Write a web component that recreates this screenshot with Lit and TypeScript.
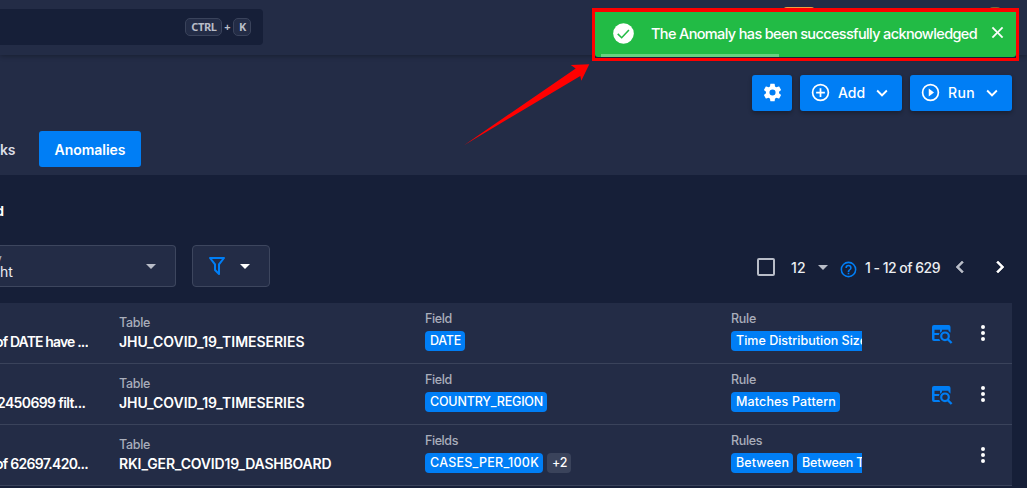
import { LitElement, html, css, svg, nothing } from "lit";
import { customElement, property } from "lit/decorators.js";

const ICONS = {
  cog: svg`<path d="M12 15.5A3.5 3.5 0 0 1 8.5 12 3.5 3.5 0 0 1 12 8.5a3.5 3.5 0 0 1 3.5 3.5 3.5 3.5 0 0 1-3.5 3.5m7.43-2.53c.04-.32.07-.64.07-.97s-.03-.66-.07-1l2.11-1.63c.19-.15.24-.42.12-.64l-2-3.46c-.12-.22-.39-.31-.61-.22l-2.49 1c-.52-.39-1.06-.73-1.69-.98l-.37-2.65A.506.506 0 0 0 14 2h-4c-.25 0-.46.18-.5.42l-.37 2.65c-.63.25-1.17.59-1.69.98l-2.49-1c-.22-.09-.49 0-.61.22l-2 3.46c-.13.22-.07.49.12.64L4.57 11c-.04.34-.07.67-.07 1s.03.65.07.97l-2.11 1.66c-.19.15-.25.42-.12.64l2 3.46c.12.22.39.3.61.22l2.49-1.01c.52.4 1.06.74 1.69.99l.37 2.65c.04.24.25.42.5.42h4c.25 0 .46-.18.5-.42l.37-2.65c.63-.26 1.17-.59 1.69-.99l2.49 1.01c.22.08.49 0 .61-.22l2-3.46c.12-.22.07-.49-.12-.64z"/>`,
  plus: svg`<path d="M12 20c-4.41 0-8-3.59-8-8s3.59-8 8-8 8 3.59 8 8-3.59 8-8 8m0-18A10 10 0 0 0 2 12a10 10 0 0 0 10 10 10 10 0 0 0 10-10A10 10 0 0 0 12 2m1 5h-2v4H7v2h4v4h2v-4h4v-2h-4z"/>`,
  play: svg`<path d="M12 20c-4.41 0-8-3.59-8-8s3.59-8 8-8 8 3.59 8 8-3.59 8-8 8m0-18A10 10 0 0 0 2 12a10 10 0 0 0 10 10 10 10 0 0 0 10-10A10 10 0 0 0 12 2m-2 14.5 6-4.5-6-4.5z"/>`,
  down: svg`<path d="M7.41 8.58 12 13.17l4.59-4.59L18 10l-6 6-6-6z"/>`,
  left: svg`<path d="M15.41 16.58 10.83 12l4.58-4.59L14 6l-6 6 6 6z" stroke="currentColor" stroke-width=".6"/>`,
  right: svg`<path d="M8.59 16.58 13.17 12 8.59 7.41 10 6l6 6-6 6z" stroke="currentColor" stroke-width=".6"/>`,
  caret: svg`<path d="m7 10 5 5 5-5z"/>`,
  filter: svg`<path d="M15 19.88c.04.3-.06.62-.29.83a.996.996 0 0 1-1.41 0L9.29 16.7a.99.99 0 0 1-.29-.83v-5.12L4.21 4.62a1 1 0 0 1 .17-1.4c.19-.14.4-.22.62-.22h14c.22 0 .43.08.62.22a1 1 0 0 1 .17 1.4L15 10.75zM7.04 5 11 10.06v5.52l2 2v-7.53L16.96 5z"/>`,
  help: svg`<path d="M11 18h2v-2h-2zm1-16A10 10 0 0 0 2 12a10 10 0 0 0 10 10 10 10 0 0 0 10-10A10 10 0 0 0 12 2m0 18c-4.41 0-8-3.59-8-8s3.59-8 8-8 8 3.59 8 8-3.59 8-8 8m0-14a4 4 0 0 0-4 4h2a2 2 0 0 1 2-2 2 2 0 0 1 2 2c0 2-3 1.75-3 5h2c0-2.25 3-2.5 3-5a4 4 0 0 0-4-4"/>`,
  close: svg`<path d="M19 6.41 17.59 5 12 10.59 6.41 5 5 6.41 10.59 12 5 17.59 6.41 19 12 13.41 17.59 19 19 17.59 13.41 12z" stroke="currentColor" stroke-width=".5"/>`,
  dots: svg`<path d="M12 16a2 2 0 0 1 2 2 2 2 0 0 1-2 2 2 2 0 0 1-2-2 2 2 0 0 1 2-2m0-6a2 2 0 0 1 2 2 2 2 0 0 1-2 2 2 2 0 0 1-2-2 2 2 0 0 1 2-2m0-6a2 2 0 0 1 2 2 2 2 0 0 1-2 2 2 2 0 0 1-2-2 2 2 0 0 1 2-2"/>`,
  check: svg`<circle cx="12" cy="12" r="11.800"/><path d="m5.400 12.500 4.500 4.300 8.300-8.800" fill="none" stroke="#22bb45" stroke-width="1.800"/>`,
  tableSearch: svg`<path d="M4 3h14.500a2 2 0 0 1 2 2v5.800a6 6 0 0 0-2-1.700V7.800H12v1.500a6 6 0 0 0-2 1.700V7.800H4.500V11h5.100l-.8 2H4.500v4h4.700q.4 1.200 1.200 2H4a2 2 0 0 1-2-2V5a2 2 0 0 1 2-2z"/><circle cx="15" cy="14.300" r="3.800" fill="none" stroke="currentColor" stroke-width="2.200"/><path d="m17.600 17 4 4" stroke="currentColor" stroke-width="2.400"/>`,
};

/** Square glyph from the icon set. */
@customElement("q-icon")
class QIcon extends LitElement {
  @property() name: keyof typeof ICONS = "cog";
  @property({ type: Number }) size = 20;
  static styles = css`
    :host { display: inline-flex; flex: none; }
    svg { display: block; fill: currentColor; }
  `;
  render() {
    return html`<svg width=${this.size} height=${this.size} viewBox="0 0 24 24">${ICONS[this.name]}</svg>`;
  }
}

/** Text that tracks itself to a given measure. */
@customElement("q-text")
class QText extends LitElement {
  @property() text = "";
  @property({ type: Number }) measure = 0;
  static styles = css`
    :host { display: inline-block; flex: none; white-space: pre; }
  `;
  render() {
    return html`<span>${this.text}</span>`;
  }
  updated() {
    const span = this.renderRoot.querySelector("span")!;
    span.style.letterSpacing = "0px";
    const natural = span.getBoundingClientRect().width;
    if (this.measure) {
      span.style.letterSpacing = `${(this.measure - natural) / this.text.length}px`;
    }
  }
}

type Label = [text: string, measure: number];
interface Row {
  note: Label;
  table: Label;
  fieldLabel: Label;
  fields: Label[];
  more?: Label;
  ruleLabel: Label;
  rules: Label[];
  source: boolean;
}

const ROWS: Row[] = [
  {
    note: ["of DATE have ...", 93],
    table: ["JHU_COVID_19_TIMESERIES", 185.5],
    fieldLabel: ["Field", 27],
    fields: [["DATE", 31]],
    ruleLabel: ["Rule", 25],
    rules: [["Time Distribution Size", 131]],
    source: true,
  },
  {
    note: ["2450699 filt... ", 91],
    table: ["JHU_COVID_19_TIMESERIES", 185.5],
    fieldLabel: ["Field", 27],
    fields: [["COUNTRY_REGION", 113]],
    ruleLabel: ["Rule", 25],
    rules: [["Matches Pattern", 100]],
    source: true,
  },
  {
    note: ["of 62697.420...", 93],
    table: ["RKI_GER_COVID19_DASHBOARD", 212.5],
    fieldLabel: ["Fields", 33],
    fields: [["CASES_PER_100K", 109]],
    more: ["+2", 15],
    ruleLabel: ["Rules", 31],
    rules: [["Between", 53], ["Between Times", 90]],
    source: false,
  },
];

const label = ([text, measure]: Label) =>
  html`<q-text .text=${text} .measure=${measure}></q-text>`;

@customElement("app-root")
class AppRoot extends LitElement {
  static styles = css`
    :host {
      display: flex;
      flex-direction: column;
      position: relative;
      width: 1027px;
      height: 488px;
      overflow: hidden;
      background: #161f38;
      color: #fff;
      font: 500 14px/20px Inter, "Open Sans", sans-serif;
    }
    * { box-sizing: border-box; }
    .top {
      flex: none;
      height: 55px;
      padding-top: 9px;
      background: #232c46;
      box-shadow: 0 1px 5px rgba(0, 0, 0, 0.3);
      z-index: 1;
    }
    .search {
      display: flex;
      align-items: center;
      justify-content: flex-end;
      gap: 2.5px;
      width: 263px;
      height: 36px;
      padding-right: 12px;
      border-radius: 0 4px 4px 0;
      background: #161f38;
      color: #b9bdc8;
      font: 700 11px/16px "Noto Sans", sans-serif;
    }
    .key {
      display: flex;
      align-items: center;
      justify-content: center;
      height: 18px;
      padding: 0 4px 0 5px;
      border: 1px solid #3a435b;
      border-radius: 5px;
      background: #232c46;
    }
    .head {
      flex: none;
      display: flex;
      flex-direction: column;
      height: 120px;
      padding-top: 20px;
      background: #232c46;
    }
    .actions {
      display: flex;
      justify-content: flex-end;
      gap: 8px;
      height: 36px;
      padding-right: 15px;
    }
    .btn {
      display: flex;
      align-items: center;
      height: 36px;
      border-radius: 3px;
      background: #007ef5;
      box-shadow: 0 2px 4px rgba(0, 0, 0, 0.3);
    }
    .btn.square { width: 40px; padding-bottom: 1px; justify-content: center; }
    .btn.wide { width: 102px; padding: 0 0 1px 10px; }
    .btn.wide q-text { margin: 1px 0 0 7px; width: 26px; }
    .btn.wide .chev { margin-left: 7px; }
    .tabs { display: flex; align-items: center; margin-top: 20px; height: 36px; }
    .tab { display: flex; justify-content: flex-end; width: 15px; margin-right: 24px; padding-top: 2px; color: #dcdfe6; font-weight: 600; }
    .tab.on {
      width: 102px;
      height: 36px;
      margin: 0;
      align-items: center;
      justify-content: center;
      border-radius: 3px;
      background: #007ef5;
      color: #fff;
    }
    .crumb {
      flex: none;
      display: flex;
      justify-content: flex-end;
      align-items: center;
      width: 4px;
      height: 70px;
      padding-top: 2px;
      font-weight: 700;
      font-size: 13px;
    }
    .filters { flex: none; display: flex; align-items: center; height: 42px; padding-right: 15px; }
    .select, .funnel {
      display: flex;
      align-items: center;
      height: 42px;
      border: 1px solid #3d465e;
      border-radius: 4px;
      background: #232c46;
    }
    .select { width: 176px; justify-content: space-between; padding-right: 12px; border-left: 0; border-radius: 0 4px 4px 0; color: #b9bdc8; }
    .value { display: flex; flex-direction: column; align-items: flex-end; width: 13px; color: #eceef2; font-size: 14px; line-height: 16px; font-weight: 400; }
    .value small { align-self: flex-start; margin-left: -5px; font-size: 12px; line-height: 13px; height: 12px; color: #b9bdc8; }
    .funnel { width: 78px; margin-left: 16px; padding-left: 12px; gap: 4px; }
    .blue { color: #007ef5; }
    .pager { display: flex; align-items: center; margin-left: auto; width: 255px; padding-top: 2px; color: #eceef2; }
    .pager q-text { margin-top: 1px; }
    .box { flex: none; width: 18px; height: 18px; margin-right: 16px; border: 2px solid #b9bdc8; border-radius: 2px; }
    .soft { color: #b9bdc8; }
    .pager .down { margin-left: 5px; }
    .pager .help { margin: 4px 7px 0 4px; }
    .pager .prev { margin-left: 8px; }
    .pager .next { margin-left: 16px; color: #fff; }
    .list { flex: none; width: 1012px; margin-top: 16px; background: #232c46; }
    .row {
      display: grid;
      grid-template-columns: 119px 306px 306px 131px 109px 1fr;
      height: 61px;
      border-bottom: 1px solid #3a435b;
      font-weight: 600;
    }
    .note { display: flex; justify-content: flex-end; width: 88px; padding-top: 29px; overflow: hidden; }
    .cell { display: flex; flex-direction: column; padding-top: 6px; overflow: hidden; }
    .table { padding-top: 10px; }
    .cap { height: 20px; color: #a9aebb; font-size: 12.5px; font-weight: 500; line-height: 20px; }
    .cell .cap { margin-bottom: 2px; }
    .table .cap { margin-bottom: -1px; }
    .chips { display: flex; gap: 4px; }
    .chip {
      flex: none;
      height: 20px;
      padding: 0 4px 0 5px;
      border-radius: 4px;
      background: #007ef5;
      font-size: 12.5px;
      font-weight: 500;
      line-height: 20px;
    }
    .chip.gray { background: #3a435b; }
    .src { display: flex; justify-content: flex-end; width: 92px; padding-top: 19px; color: #007ef5; }
    .menu { padding-top: 18px; }
    .avatar, .coin { position: absolute; z-index: 1; top: 7px; height: 5px; border-radius: 4px 4px 0 0; }
    .avatar { left: 783px; width: 32px; background: #e9a044; }
    .coin { left: 989px; width: 12px; background: #77683a; }
    .frame {
      position: absolute;
      z-index: 2;
      left: 592px;
      top: 8px;
      width: 427px;
      height: 53px;
      border: 3px solid #ff0000;
      border-top-width: 4px;
      background: #161f38;
    }
    .toast {
      display: flex;
      align-items: center;
      position: relative;
      height: 45px;
      padding: 0 9px 3px 18px;
      border-radius: 0 0 3px 3px;
      background: #22bb45;
    }
    .toast q-text { margin: 2px 0 0 17px; font-size: 14.5px; }
    .toast .x { margin: 0 0 1px auto; }
    .bar { position: absolute; left: 6px; bottom: 0; width: 178px; height: 3px; background: rgba(255, 255, 255, 0.32); }
    .arrow { position: absolute; z-index: 2; left: 460px; top: 60px; }
  `;

  private row(r: Row) {
    return html`<div class="row">
      <div class="note">${label(r.note)}</div>
      <div class="cell table"><div class="cap">${label(["Table", 31])}</div>${label(r.table)}</div>
      <div class="cell">
        <div class="cap">${label(r.fieldLabel)}</div>
        <div class="chips">
          ${r.fields.map((f) => html`<div class="chip">${label(f)}</div>`)}
          ${r.more ? html`<div class="chip gray">${label(r.more)}</div>` : nothing}
        </div>
      </div>
      <div class="cell">
        <div class="cap">${label(r.ruleLabel)}</div>
        <div class="chips">${r.rules.map((f) => html`<div class="chip">${label(f)}</div>`)}</div>
      </div>
      <div class="src">${r.source ? html`<q-icon name="tableSearch" size="24"></q-icon>` : nothing}</div>
      <div class="menu"><q-icon name="dots" size="24"></q-icon></div>
    </div>`;
  }

  render() {
    return html`
      <div class="top">
        <div class="search">
          <div class="key">${label(["CTRL", 25.5])}</div><span>+</span><div class="key">${label(["K", 7])}</div>
        </div>
      </div>
      <div class="head">
        <div class="actions">
          <div class="btn square"><q-icon name="cog" size="21"></q-icon></div>
          <div class="btn wide"><q-icon name="plus" size="21"></q-icon>${label(["Add", 27])}<q-icon class="chev" name="down" size="22"></q-icon></div>
          <div class="btn wide"><q-icon name="play" size="21"></q-icon>${label(["Run", 27])}<q-icon class="chev" name="down" size="22"></q-icon></div>
        </div>
        <div class="tabs">
          <div class="tab">${label(["ks", 15])}</div>
          <div class="tab on">${label(["Anomalies", 71])}</div>
        </div>
      </div>
      <div class="crumb">d</div>
      <div class="filters">
        <div class="select">
          <div class="value"><small>y</small>${label(["ht", 13])}</div>
          <q-icon name="caret" size="24"></q-icon>
        </div>
        <div class="funnel">
          <q-icon class="blue" name="filter" size="24"></q-icon><q-icon name="caret" size="24"></q-icon>
        </div>
        <div class="pager">
          <div class="box"></div>${label(["12", 15])}
          <q-icon class="soft down" name="caret" size="24"></q-icon>
          <q-icon class="blue help" name="help" size="19"></q-icon>
          ${label(["1 - 12 of 629", 75])}
          <q-icon class="soft prev" name="left" size="24"></q-icon>
          <q-icon class="next" name="right" size="24"></q-icon>
        </div>
      </div>
      <div class="list">${ROWS.map((r) => this.row(r))}</div>
      <div class="avatar"></div>
      <div class="coin"></div>
      <div class="frame">
        <div class="toast">
          <q-icon name="check" size="21"></q-icon>
          ${label(["The Anomaly has been successfully acknowledged", 326])}
          <q-icon class="x" name="close" size="19"></q-icon>
          <div class="bar"></div>
        </div>
      </div>
      <svg class="arrow" width="140" height="90" viewBox="460 60 140 90">
        <path fill="#ff0000" d="M589.300 64.300 570.700 65 575.700 68.500 464 145.200 580.300 76 581.300 80.700z"/>
      </svg>
    `;
  }
}
